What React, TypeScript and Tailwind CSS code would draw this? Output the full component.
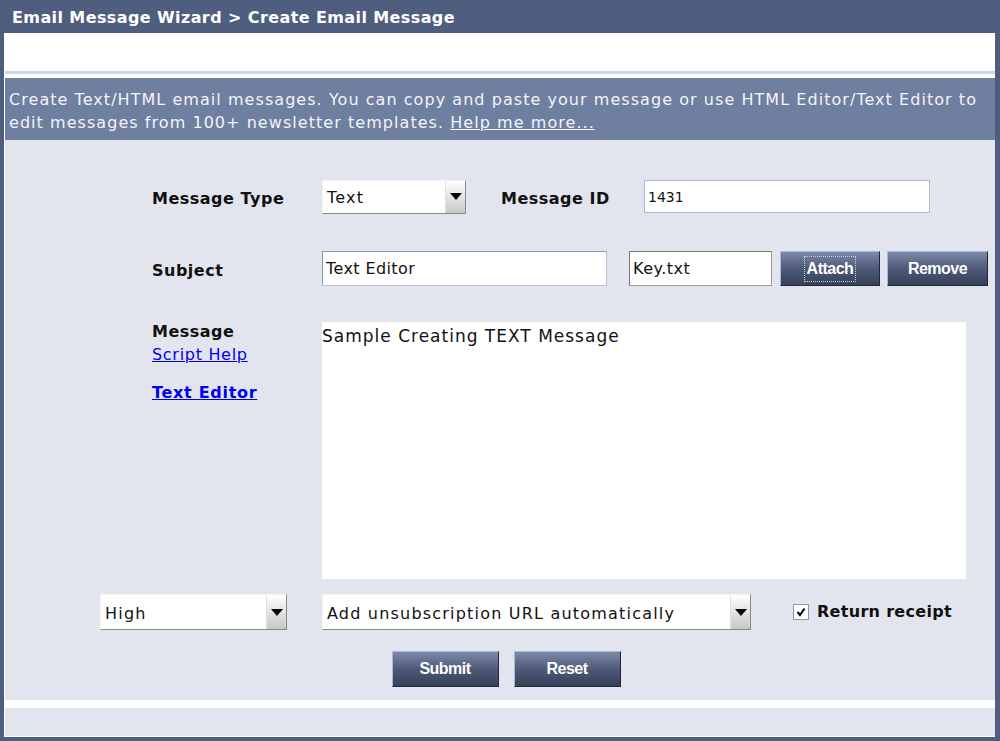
import React from "react";

const FONT = "font-['DejaVu_Sans',Verdana,sans-serif]";
const BTN_FONT = "font-['Liberation_Sans',Arial,sans-serif]";

function Select({ value, className }: { value: string; className: string }) {
  return (
    <div
      className={`flex items-stretch bg-white border border-t-[#f4f4f4] border-l-[#f4f4f4] border-r-[#8a8a8a] border-b-[#8a8a8a] ${className}`}
    >
      <span className="flex-1 flex items-center pl-[4px] pt-[3px] text-[16px] tracking-[1.2px] text-[#111] truncate">
        {value}
      </span>
      <span className="w-[20px] flex items-center justify-center bg-gradient-to-b from-[#ffffff] to-[#c8c8c8] border-l border-[#e0e0e0]">
        <svg width="12" height="7" viewBox="0 0 12 7">
          <path d="M0 0 H12 L6 7 Z" fill="#000" />
        </svg>
      </span>
    </div>
  );
}

function Field({ value, className }: { value: string; className: string }) {
  return (
    <div
      className={`flex items-center bg-white border pl-[3px] pt-[1px] text-[#111] ${className}`}
    >
      {value}
    </div>
  );
}

function Button({ label, focus, className }: { label: string; focus?: boolean; className: string }) {
  return (
    <button
      className={`flex items-center justify-center bg-gradient-to-b from-[#7e8aa8] via-[#4e5a78] to-[#36405a] border border-t-[#a9b9df] border-l-[#a9b9df] border-r-[#202838] border-b-[#202838] text-white font-bold text-[16px] tracking-[-0.5px] ${BTN_FONT} ${className}`}
    >
      <span className={focus ? "border border-dotted border-[#c8d0e0] px-[2px] leading-[24px]" : ""}>{label}</span>
    </button>
  );
}

export default function App() {
  return (
    <div className={`w-[1000px] h-[741px] bg-[#4f5e7f] pl-[4px] pr-[5px] pb-[4px] flex flex-col ${FONT}`}>
      <div className="h-[33px] flex items-center pl-[8px] pt-[3px] text-white font-bold text-[16px] tracking-[0.4px]">
        Email Message Wizard &gt; Create Email Message
      </div>
      <div className="flex-1 flex flex-col bg-white border-l border-white">
        <div className="h-[38px] bg-white" />
        <div className="h-[3px] bg-[#d0d5e3]" />
        <div className="h-[4px] bg-white" />
        <div className="h-[62px] bg-[#6e7fa0] px-[4px] pt-[10px] text-[16px] tracking-[1.05px] leading-[23px] text-[#f2f4f8] whitespace-nowrap">
          Create Text/HTML email messages. You can copy and paste your message or use HTML Editor/Text Editor to
          <br />
          edit messages from 100+ newsletter templates. <span className="underline">Help me more...</span>
        </div>
        <div className="h-[560px] bg-[#e2e5ee] flex flex-col">
          <div className="flex items-center mt-[40px] h-[33px]">
            <span className="w-[170px] ml-[147px] pt-[5px] font-bold text-[16px] tracking-[0.5px] text-[#111]">Message Type</span>
            <Select value="Text" className="w-[144px] h-[34px]" />
            <span className="ml-[35px] w-[143px] pt-[5px] font-bold text-[16px] tracking-[0.5px] text-[#111]">Message ID</span>
            <Field
              value="1431"
              className="w-[286px] h-[33px] text-[14px] border-[#a9bbd8]"
            />
          </div>
          <div className="flex items-center mt-[38px] h-[35px]">
            <span className="w-[170px] ml-[147px] pt-[4px] font-bold text-[16px] tracking-[0.5px] text-[#111]">Subject</span>
            <Field
              value="Text Editor"
              className="w-[285px] h-[35px] text-[16px] tracking-[0.4px] border-t-[#7f9db9] border-l-[#7f9db9] border-r-[#b8c6d8] border-b-[#b8c6d8]"
            />
            <Field
              value="Key.txt"
              className="ml-[22px] w-[143px] h-[35px] text-[16px] tracking-[0.5px] border-t-[#777] border-l-[#777] border-r-[#999] border-b-[#999]"
            />
            <Button label="Attach" focus className="ml-[8px] w-[100px] h-[35px]" />
            <Button label="Remove" className="ml-[7px] w-[101px] h-[35px]" />
          </div>
          <div className="flex mt-[36px]">
            <div className="w-[170px] ml-[147px] flex flex-col text-[16px] tracking-[0.5px]">
              <span className="font-bold text-[#111] leading-[20px]">Message</span>
              <a href="#" className="text-[#0000ee] underline leading-[22px] mt-[2px] tracking-[0.7px]">Script Help</a>
              <a href="#" className="text-[#0000ee] underline font-bold text-[16px] tracking-[0.7px] mt-[16px] leading-[22px]">Text Editor</a>
            </div>
            <div className="w-[644px] h-[257px] bg-white pt-[2px] text-[17px] tracking-[1px] text-[#111]">
              Sample Creating TEXT Message
            </div>
          </div>
          <div className="flex items-center mt-[15px] h-[36px]">
            <Select value="High" className="ml-[95px] w-[187px] h-[36px]" />
            <Select value="Add unsubscription URL automatically" className="ml-[35px] w-[429px] h-[36px]" />
            <div className="ml-[42px] flex items-center">
              <span className="w-[16px] h-[16px] bg-white border border-[#7f9db9] flex items-center justify-center">
                <svg width="10" height="10" viewBox="0 0 10 10">
                  <path d="M1.5 5 L4 8 L8.5 1.5" stroke="#000" strokeWidth="2" fill="none" />
                </svg>
              </span>
              <span className="ml-[8px] font-bold text-[16px] tracking-[0.3px] text-[#111]">Return receipt</span>
            </div>
          </div>
          <div className="flex justify-center gap-[15px] mt-[21px] pl-[12px]">
            <Button label="Submit" className="w-[107px] h-[36px]" />
            <Button label="Reset" className="w-[107px] h-[36px]" />
          </div>
        </div>
        <div className="h-[8px] bg-white" />
        <div className="flex-1 bg-[#e2e5ee] border-b border-white" />
      </div>
    </div>
  );
}
